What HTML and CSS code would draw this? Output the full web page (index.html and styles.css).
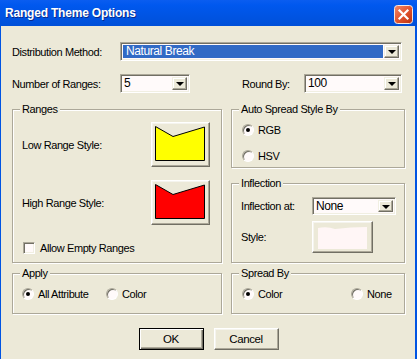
FILE: index.html
```html
<!DOCTYPE html>
<html>
<head>
<meta charset="utf-8">
<link rel="stylesheet" href="styles.css">
</head>
<body>
<div class="window">
  <div class="titlebar">
    <span class="title">Ranged Theme Options</span>
    <div class="close">
      <svg width="19" height="19" viewBox="0 0 19 19">
        <defs>
          <linearGradient id="cg" x1="0" y1="0" x2="1" y2="1">
            <stop offset="0" stop-color="#f08a6c"/>
            <stop offset="0.5" stop-color="#e2552f"/>
            <stop offset="1" stop-color="#b8300e"/>
          </linearGradient>
        </defs>
        <rect x="0.5" y="0.5" width="18" height="18" rx="3" fill="url(#cg)" stroke="#f5e8e2"/>
        <path d="M5.5 5.5 L13.5 13.5 M13.5 5.5 L5.5 13.5" stroke="#fff" stroke-width="2.2" stroke-linecap="square"/>
      </svg>
    </div>
  </div>
  <div class="body">
    <div class="row row1">
      <span class="lbl lbl-main">Distribution Method:</span>
      <div class="select sel-dist">
        <span class="sel-text hl">Natural Break</span>
        <span class="drop"><span class="tri"></span></span>
      </div>
    </div>
    <div class="row row2">
      <span class="lbl lbl-main">Number of Ranges:</span>
      <div class="select sel-num">
        <span class="sel-text">5</span>
        <span class="drop"><span class="tri"></span></span>
      </div>
      <span class="lbl lbl-round">Round By:</span>
      <div class="select sel-round">
        <span class="sel-text">100</span>
        <span class="drop"><span class="tri"></span></span>
      </div>
    </div>

    <div class="groups">
      <div class="col col-left">
        <div class="group g-ranges">
          <span class="legend">Ranges</span>
          <div class="style-row">
            <span class="lbl">Low Range Style:</span>
            <div class="btn style-btn">
              <svg width="57" height="43" viewBox="0 0 57 43">
                <polygon points="3.5,3.5 21,13.5 52.5,4 52.5,37.5 3.5,37.5" fill="#ffff00" stroke="#000" stroke-width="1"/>
              </svg>
            </div>
          </div>
          <div class="style-row second">
            <span class="lbl">High Range Style:</span>
            <div class="btn style-btn">
              <svg width="57" height="43" viewBox="0 0 57 43">
                <polygon points="3.5,3.5 21,13.5 52.5,4 52.5,37.5 3.5,37.5" fill="#ff0000" stroke="#000" stroke-width="1"/>
              </svg>
            </div>
          </div>
          <div class="check-row">
            <span class="checkbox"></span>
            <span class="lbl">Allow Empty Ranges</span>
          </div>
        </div>
        <div class="group g-apply">
          <span class="legend">Apply</span>
          <div class="radio-row">
            <div class="opt opt-all"><span class="radio on"></span><span class="lbl">All Attribute</span></div>
            <div class="opt"><span class="radio"></span><span class="lbl">Color</span></div>
          </div>
        </div>
      </div>

      <div class="col col-right">
        <div class="group g-auto">
          <span class="legend">Auto Spread Style By</span>
          <div class="opt"><span class="radio on"></span><span class="lbl">RGB</span></div>
          <div class="opt opt-hsv"><span class="radio"></span><span class="lbl">HSV</span></div>
        </div>
        <div class="group g-infl">
          <span class="legend">Inflection</span>
          <div class="infl-row">
            <span class="lbl lbl-infl">Inflection at:</span>
            <div class="select sel-infl">
              <span class="sel-text">None</span>
              <span class="drop"><span class="tri"></span></span>
            </div>
          </div>
          <div class="infl-row second">
            <span class="lbl lbl-infl">Style:</span>
            <div class="btn infl-btn">
              <svg width="59" height="30" viewBox="0 0 59 30">
                <path d="M5 6 Q14 4 22 7 Q38 5 54 5 L54 27 L5 27 Z" fill="#fff6f6"/>
              </svg>
            </div>
          </div>
        </div>
        <div class="group g-spread">
          <span class="legend">Spread By</span>
          <div class="radio-row">
            <div class="opt opt-color"><span class="radio on"></span><span class="lbl">Color</span></div>
            <div class="opt"><span class="radio"></span><span class="lbl">None</span></div>
          </div>
        </div>
      </div>
    </div>

    <div class="buttons">
      <div class="btn push default">OK</div>
      <div class="btn push">Cancel</div>
    </div>
  </div>
</div>
</body>
</html>
```

FILE: styles.css
```css
* { box-sizing: border-box; }

body {
  margin: 0;
  font-family: "Liberation Sans", Arial, sans-serif;
  font-size: 11px;
  letter-spacing: -0.4px;
  color: #000;
}

.window {
  width: 417px;
  height: 359px;
  background: #0054e3;
  display: flex;
  flex-direction: column;
  overflow: hidden;
}

.titlebar {
  height: 26px;
  flex: none;
  display: flex;
  justify-content: space-between;
  align-items: flex-start;
  padding: 0 4px 0 5px;
  background: linear-gradient(to bottom, #0a5df0 0%, #0058ee 20%, #0054e3 60%, #0050d8 100%);
}

.title {
  margin-top: 6px;
  color: #fff;
  font-weight: bold;
  font-size: 12px;
  letter-spacing: -0.2px;
  text-shadow: 1px 1px 0 #0a2a8c;
}

.close {
  margin-top: 5px;
  width: 19px;
  height: 19px;
}
.close svg { display: block; }

.body {
  flex: 1;
  margin: 0 2px 0 1px;
  background: #ece9d8;
  padding: 16px 10px 0 11px;
}

.row {
  display: flex;
  align-items: center;
  height: 19px;
  margin-right: 3px;
}
.row2 { margin-top: 13px; }

.lbl { white-space: nowrap; }
.lbl-main { width: 108px; flex: none; }
.lbl-round { margin-left: auto; width: 62px; }

.select {
  display: flex;
  height: 19px;
  border: 1px solid;
  border-color: #aca899 #fff #fff #aca899;
  box-shadow: inset 1px 1px 0 #716f64, inset -1px -1px 0 #f1efe2;
  background: #fffafa;
  padding: 2px;
}
.sel-dist { flex: 1; }
.sel-num { width: 70px; }
.sel-round { width: 98px; }
.sel-infl { width: 84px; height: 18px; }

.sel-text {
  flex: 1;
  padding-left: 1px;
  line-height: 13px;
  font-size: 12px;
}
.sel-text.hl {
  background: #316ac5;
  color: #fff;
  padding-left: 3px;
  margin-right: 1px;
}

.drop {
  width: 15px;
  flex: none;
  background: #ece9d8;
  border: 1px solid;
  border-color: #f1efe2 #716f64 #716f64 #f1efe2;
  box-shadow: inset -1px -1px 0 #aca899, inset 1px 1px 0 #fff;
  display: flex;
  align-items: center;
  justify-content: center;
}
.tri {
  width: 0;
  height: 0;
  border-left: 4px solid transparent;
  border-right: 4px solid transparent;
  border-top: 4px solid #000;
  margin-top: 1px;
}

.groups {
  display: flex;
  gap: 9px;
  margin-top: 16px;
}
.col { display: flex; flex-direction: column; }
.col-left { width: 210px; }
.col-right { width: 174px; }

.group {
  position: relative;
  border: 1px solid #aca899;
  box-shadow: inset 1px 1px 0 #fff, 1px 1px 0 #fff;
}
.legend {
  position: absolute;
  top: -7px;
  left: 7px;
  padding: 0 2px;
  line-height: 13px;
  background: #ece9d8;
  white-space: nowrap;
}

.g-ranges {
  height: 154px;
  padding: 12px 11px 0 9px;
}
.style-row {
  display: flex;
  justify-content: space-between;
  align-items: center;
  height: 45px;
}
.style-row.second { margin-top: 13px; }

.btn {
  background: #ece9d8;
  border: 1px solid;
  border-color: #fff #716f64 #716f64 #fff;
  box-shadow: inset -1px -1px 0 #aca899, inset 1px 1px 0 #f5f4ee;
}
.style-btn { width: 59px; height: 45px; }
.style-btn svg, .infl-btn svg { display: block; }

.check-row {
  display: flex;
  align-items: center;
  height: 12px;
  margin-top: 17px;
  margin-left: 1px;
}
.checkbox {
  width: 12px;
  height: 12px;
  flex: none;
  background: #fffafa;
  border: 1px solid;
  border-color: #aca899 #fff #fff #aca899;
  box-shadow: inset 1px 1px 0 #716f64, inset -1px -1px 0 #f1efe2;
  margin-right: 5px;
}

.g-apply {
  margin-top: 10px;
  height: 41px;
  padding: 14px 0 0 9px;
}
.radio-row { display: flex; align-items: center; height: 12px; }

.opt {
  display: flex;
  align-items: center;
  height: 12px;
}
.opt-all { width: 84px; }
.opt-color { width: 109px; }

.radio {
  position: relative;
  width: 12px;
  height: 12px;
  flex: none;
  border-radius: 50%;
  background: #fffafa;
  border: 1px solid;
  border-color: #aca899 #fff #fff #aca899;
  box-shadow: inset 1px 1px 0 #716f64;
  margin-right: 4px;
}
.radio.on::after {
  content: "";
  position: absolute;
  left: 3px;
  top: 3px;
  width: 4px;
  height: 4px;
  border-radius: 50%;
  background: #000;
}

.g-auto {
  height: 59px;
  padding: 14px 0 0 10px;
}
.opt-hsv { margin-top: 14px; }

.g-infl {
  margin-top: 15px;
  height: 80px;
  padding: 13px 0 0 9px;
}
.infl-row {
  display: flex;
  align-items: center;
}
.infl-row.second { margin-top: 6px; }
.lbl-infl { width: 71px; flex: none; }
.infl-btn { width: 61px; height: 32px; }

.g-spread {
  margin-top: 10px;
  height: 41px;
  padding: 14px 0 0 10px;
}

.buttons {
  display: flex;
  justify-content: center;
  gap: 10px;
  margin-top: 14px;
}
.push {
  width: 65px;
  height: 22px;
  display: flex;
  align-items: center;
  justify-content: center;
  font-size: 11.5px;
}
.push.default {
  border-color: #000;
  box-shadow: inset 1px 1px 0 #fff, inset -1px -1px 0 #716f64, inset -2px -2px 0 #aca899;
}
```
